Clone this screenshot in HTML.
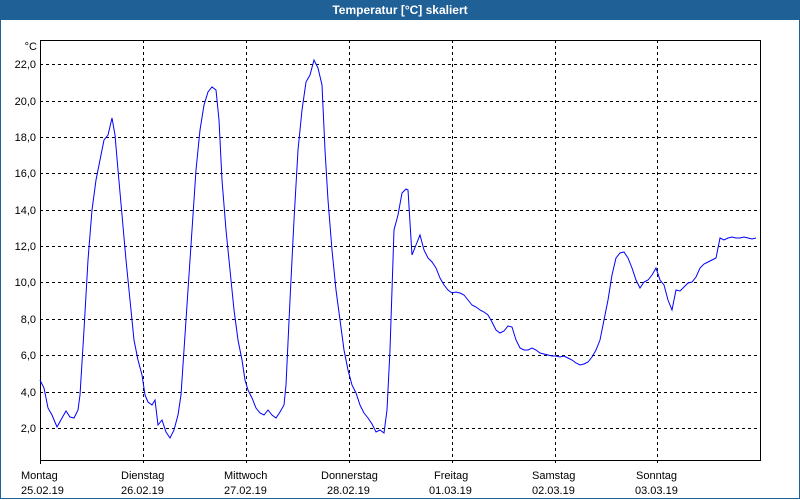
<!DOCTYPE html>
<html><head><meta charset="utf-8"><style>
body{margin:0;width:800px;height:500px;overflow:hidden;background:#fff;font-family:"Liberation Sans","DejaVu Sans",sans-serif;}
#t{position:absolute;left:0;top:0;width:800px;height:20px;background:#1f6096;color:#fff;font-weight:bold;font-size:12px;text-align:center;line-height:20px;}
#f{position:absolute;left:0;top:20px;width:798px;height:478px;border:1px solid #1f6096;border-top:none;}
</style></head><body>
<div id="t">Temperatur [°C] skaliert</div>
<div id="f"></div>
<svg width="800" height="500" style="position:absolute;left:0;top:0" font-family="Liberation Sans, DejaVu Sans, sans-serif" font-size="11">
<g stroke="#000" stroke-dasharray="3,3" stroke-width="1">
<line x1="40" x2="760" y1="64.5" y2="64.5"/><line x1="40" x2="760" y1="101.5" y2="101.5"/><line x1="40" x2="760" y1="137.5" y2="137.5"/><line x1="40" x2="760" y1="173.5" y2="173.5"/><line x1="40" x2="760" y1="210.5" y2="210.5"/><line x1="40" x2="760" y1="246.5" y2="246.5"/><line x1="40" x2="760" y1="282.5" y2="282.5"/><line x1="40" x2="760" y1="319.5" y2="319.5"/><line x1="40" x2="760" y1="355.5" y2="355.5"/><line x1="40" x2="760" y1="392.5" y2="392.5"/><line x1="40" x2="760" y1="428.5" y2="428.5"/>
<line x1="143.5" x2="143.5" y1="40" y2="463"/><line x1="246.5" x2="246.5" y1="40" y2="463"/><line x1="349.5" x2="349.5" y1="40" y2="463"/><line x1="452.5" x2="452.5" y1="40" y2="463"/><line x1="555.5" x2="555.5" y1="40" y2="463"/><line x1="657.5" x2="657.5" y1="40" y2="463"/>
</g>
<path d="M40.5 40.5H760.5V460.5H40.5Z" fill="none" stroke="#000"/>
<line x1="40.5" x2="40.5" y1="460" y2="464" stroke="#000"/>
<g text-anchor="end" fill="#000">
<text x="37" y="50">°C</text>
<text x="36" y="68">22,0</text><text x="36" y="105">20,0</text><text x="36" y="141">18,0</text><text x="36" y="177">16,0</text><text x="36" y="214">14,0</text><text x="36" y="250">12,0</text><text x="36" y="286">10,0</text><text x="36" y="323">8,0</text><text x="36" y="359">6,0</text><text x="36" y="396">4,0</text><text x="36" y="432">2,0</text>
</g>
<g fill="#000">
<text x="21" y="479">Montag</text><text x="21" y="494">25.02.19</text>
<text x="121" y="479">Dienstag</text><text x="121" y="494">26.02.19</text>
<text x="224" y="479">Mittwoch</text><text x="224" y="494">27.02.19</text>
<text x="321" y="479">Donnerstag</text><text x="327" y="494">28.02.19</text>
<text x="434" y="479">Freitag</text><text x="429" y="494">01.03.19</text>
<text x="532" y="479">Samstag</text><text x="532" y="494">02.03.19</text>
<text x="636" y="479">Sonntag</text><text x="635" y="494">03.03.19</text>
</g>
<polyline fill="none" stroke="#0000ff" stroke-width="1" points="40,380 44,388 48,408 52,415 57,427 62,418 66,411 70,417 74,418 78,410 80,395 84,330 88,260 92,210 96,180 100,160 104,140 108,135 112,118 115,135 118,170 122,215 126,260 130,300 134,340 138,360 142,375 145,395 148,402 152,405 155,400 158,425 162,420 166,432 170,438 174,430 178,415 181,395 184,350 188,290 192,230 196,170 200,130 204,105 208,92 212,87 216,90 219,120 222,180 226,230 230,270 234,310 238,340 242,360 245,380 248,390 252,398 256,408 260,413 264,415 268,410 272,415 276,418 280,412 284,405 286,385 290,300 294,220 298,150 302,110 306,82 310,75 314,60 318,68 322,85 325,150 328,200 332,250 336,290 340,320 344,350 348,370 352,385 356,393 360,405 364,413 368,418 372,424 376,432 380,430 384,433 387,410 390,350 394,230 398,215 402,193 406,189 408,190 412,255 416,245 420,235 424,250 428,258 432,262 436,268 440,278 444,285 448,290 452,293 456,292 460,293 464,295 468,300 472,305 476,307 480,310 484,312 488,315 492,322 496,330 500,333 504,331 508,326 512,327 516,340 520,348 524,350 528,350 532,348 536,350 540,353 544,354 548,355 552,356 556,356 560,357 564,356 568,358 572,360 576,363 580,365 584,364 588,362 592,357 596,350 600,340 604,320 608,300 612,275 616,258 620,253 624,252 628,258 632,268 636,280 640,288 644,282 648,280 652,275 656,268 660,280 664,285 668,300 672,310 676,290 680,291 684,287 688,283 692,282 696,277 700,268 704,264 708,262 712,260 716,258 720,238 724,240 728,238 732,237 736,238 740,238 744,237 748,238 752,239 756,238"/>
</svg>
</body></html>
